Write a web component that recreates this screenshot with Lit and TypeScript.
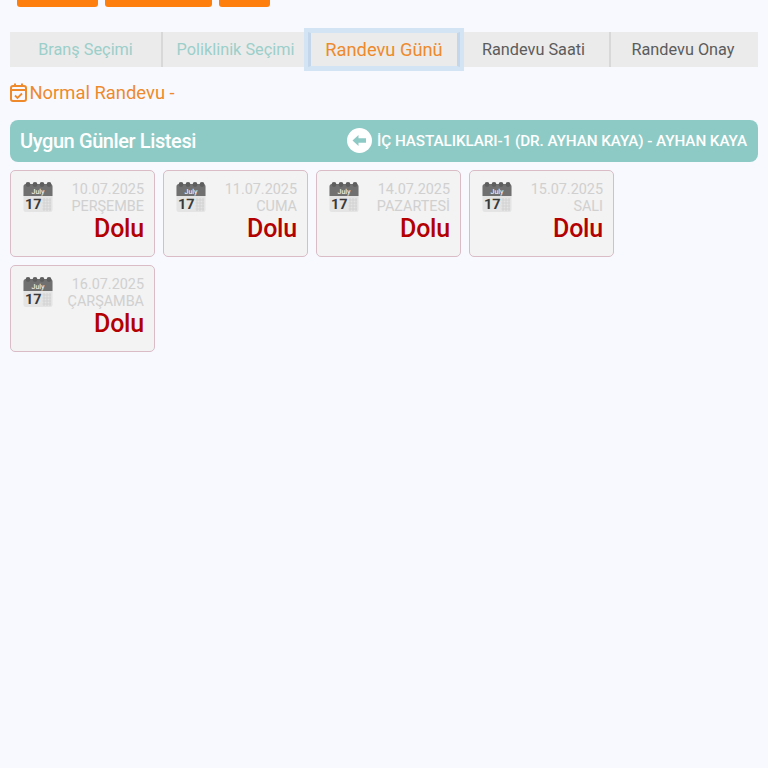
import { LitElement, html, css } from "lit";
import { customElement } from "lit/decorators.js";

const days: [string, string][] = [
  ["10.07.2025", "PERŞEMBE"],
  ["11.07.2025", "CUMA"],
  ["14.07.2025", "PAZARTESİ"],
  ["15.07.2025", "SALI"],
  ["16.07.2025", "ÇARŞAMBA"],
];

const tabs: [string, string, number][] = [
  ["Branş Seçimi", "done", 151],
  ["Poliklinik Seçimi", "done sep", 147],
  ["Randevu Günü", "active", 152],
  ["Randevu Saati", "pr2", 149],
  ["Randevu Onay", "sep pr3", 149],
];

const calIcon = html`<svg class="cal" width="30" height="32" viewBox="0 0 30 32">
  <rect x="0.5" y="3" width="29" height="28" rx="2.5" fill="#e4e4e4"/>
  <path d="M0.5 15V5.5A2.5 2.5 0 0 1 3 3H27A2.5 2.5 0 0 1 29.5 5.5V15Z" fill="#707070"/>
  <circle cx="5" cy="3.5" r="2.4" fill="#5e5e5e"/><circle cx="12" cy="3.5" r="2.4" fill="#5e5e5e"/>
  <circle cx="19" cy="3.5" r="2.4" fill="#5e5e5e"/><circle cx="26" cy="3.5" r="2.4" fill="#5e5e5e"/>
  <text x="15" y="12.5" text-anchor="middle" font-family="Roboto" font-size="7" font-weight="500" fill="#eee" style="text-rendering:geometricPrecision">July</text>
  <text x="2" y="28" font-family="Roboto" font-size="14.5" font-weight="700" fill="#3a3a3a" style="text-rendering:geometricPrecision">17</text>
  <path d="M19.5 19H28M19.5 22H28M19.5 25H28M19.5 28H28M21 17V30M24 17V30M27 17V30" stroke="#d2d2d2" stroke-width="1" fill="none"/>
</svg>`;

@customElement("app-root")
export class AppRoot extends LitElement {
  static styles = css`
    :host {
      display: block;
      min-height: 768px;
      background: #f8f9ff;
      font-family: Roboto, "Liberation Sans", sans-serif;
      box-sizing: border-box;
      overflow: hidden;
    }
    .top {
      display: flex;
      gap: 7px;
      height: 7px;
      padding-left: 17px;
    }
    .top span {
      height: 7px;
      background: #ff7f0e;
      border-radius: 0 0 3px 3px;
    }
    .tabs {
      display: flex;
      height: 35px;
      margin: 25px 10px 0;
      background: #ebebeb;
    }
    .tab {
      display: flex;
      align-items: center;
      justify-content: center;
      box-sizing: border-box;
      font-size: 16.3px;
      color: #5c5c5c;
      position: relative;
    }
    .tab.sep {
      border-left: 2px solid #d8d8d8;
    }
    .tab.pr2 {
      padding-right: 2px;
    }
    .tab.pr3 {
      padding-right: 3px;
    }
    .tab.done {
      color: #9ccfca;
    }
    .tab.active {
      color: #ee8a2c;
      font-size: 18.3px;
      border-style: solid;
      border-color: #d3e4f5;
      border-width: 1px 3px;
      border-left-color: #c3d6ea;
      border-right-color: #c3d6ea;
      box-shadow: 0 0 0 4px #d3e4f5;
      z-index: 1;
    }
    .title {
      display: flex;
      align-items: center;
      gap: 2.5px;
      margin: 14px 10px 0;
      height: 22px;
      font-size: 18.4px;
      color: #ee8a2c;
    }
    .bar {
      display: flex;
      align-items: center;
      justify-content: space-between;
      height: 42px;
      margin: 16.5px 10px 0;
      padding: 0 11px 0 10px;
      background: #8ecac5;
      border-radius: 8px;
      color: #fff;
    }
    .bar h2 {
      margin: 0;
      font-size: 20px;
      font-weight: 500;
      letter-spacing: -0.4px;
    }
    .right {
      display: flex;
      align-items: center;
      gap: 5px;
      font-size: 15.25px;
      font-weight: 500;
      letter-spacing: -0.08px;
    }
    .grid {
      display: grid;
      grid-template-columns: repeat(4, 145px);
      column-gap: 8px;
      row-gap: 8.5px;
      margin: 8.5px 10px 0;
    }
    .card {
      height: 86.5px;
      box-sizing: border-box;
      border: 1px solid #d9bcc6;
      border-radius: 5px;
      background: #f3f3f3;
      display: flex;
      justify-content: space-between;
      padding: 10px 10px 0 12px;
    }
    .info {
      text-align: right;
      line-height: 17px;
      font-size: 14.4px;
      color: #d0d0d0;
    }
    .dolu {
      color: #b30000;
      font-size: 25px;
      font-weight: 500;
      line-height: 28px;
      letter-spacing: -0.2px;
    }
  `;

  render() {
    return html`
      <div class="top">
        <span style="width:81px"></span><span style="width:107px"></span><span style="width:51px"></span>
      </div>
      <div class="tabs">
        ${tabs.map(
          ([t, c, w]) => html`<div class="tab ${c}" style="width:${w}px">${t}</div>`
        )}
      </div>
      <div class="title">
        <svg width="17" height="19" viewBox="0 0 17 19" fill="none" stroke="#ee8a2c" stroke-width="2">
          <rect x="1" y="3" width="15" height="15" rx="2"/>
          <path d="M1 7H16M5 0.5V4M12 0.5V4"/>
          <path d="M5 12.5L7.5 15L12 10.5" stroke-width="1.8"/>
        </svg>
        <span>Normal Randevu -</span>
      </div>
      <div class="bar">
        <h2>Uygun Günler Listesi</h2>
        <div class="right">
          <svg width="25" height="25" viewBox="0 0 25 25">
            <circle cx="12.5" cy="12.5" r="12.5" fill="#fff"/>
            <path d="M5.5 12.5L11.5 7V10.2H19V14.8H11.5V18Z" fill="#8ecac5"/>
          </svg>
          <span>İÇ HASTALIKLARI-1 (DR. AYHAN KAYA) - AYHAN KAYA</span>
        </div>
      </div>
      <div class="grid">
        ${days.map(
          ([d, n]) => html`<div class="card">
            ${calIcon}
            <div class="info">
              <div>${d}</div>
              <div>${n}</div>
              <div class="dolu">Dolu</div>
            </div>
          </div>`
        )}
      </div>
    `;
  }
}
